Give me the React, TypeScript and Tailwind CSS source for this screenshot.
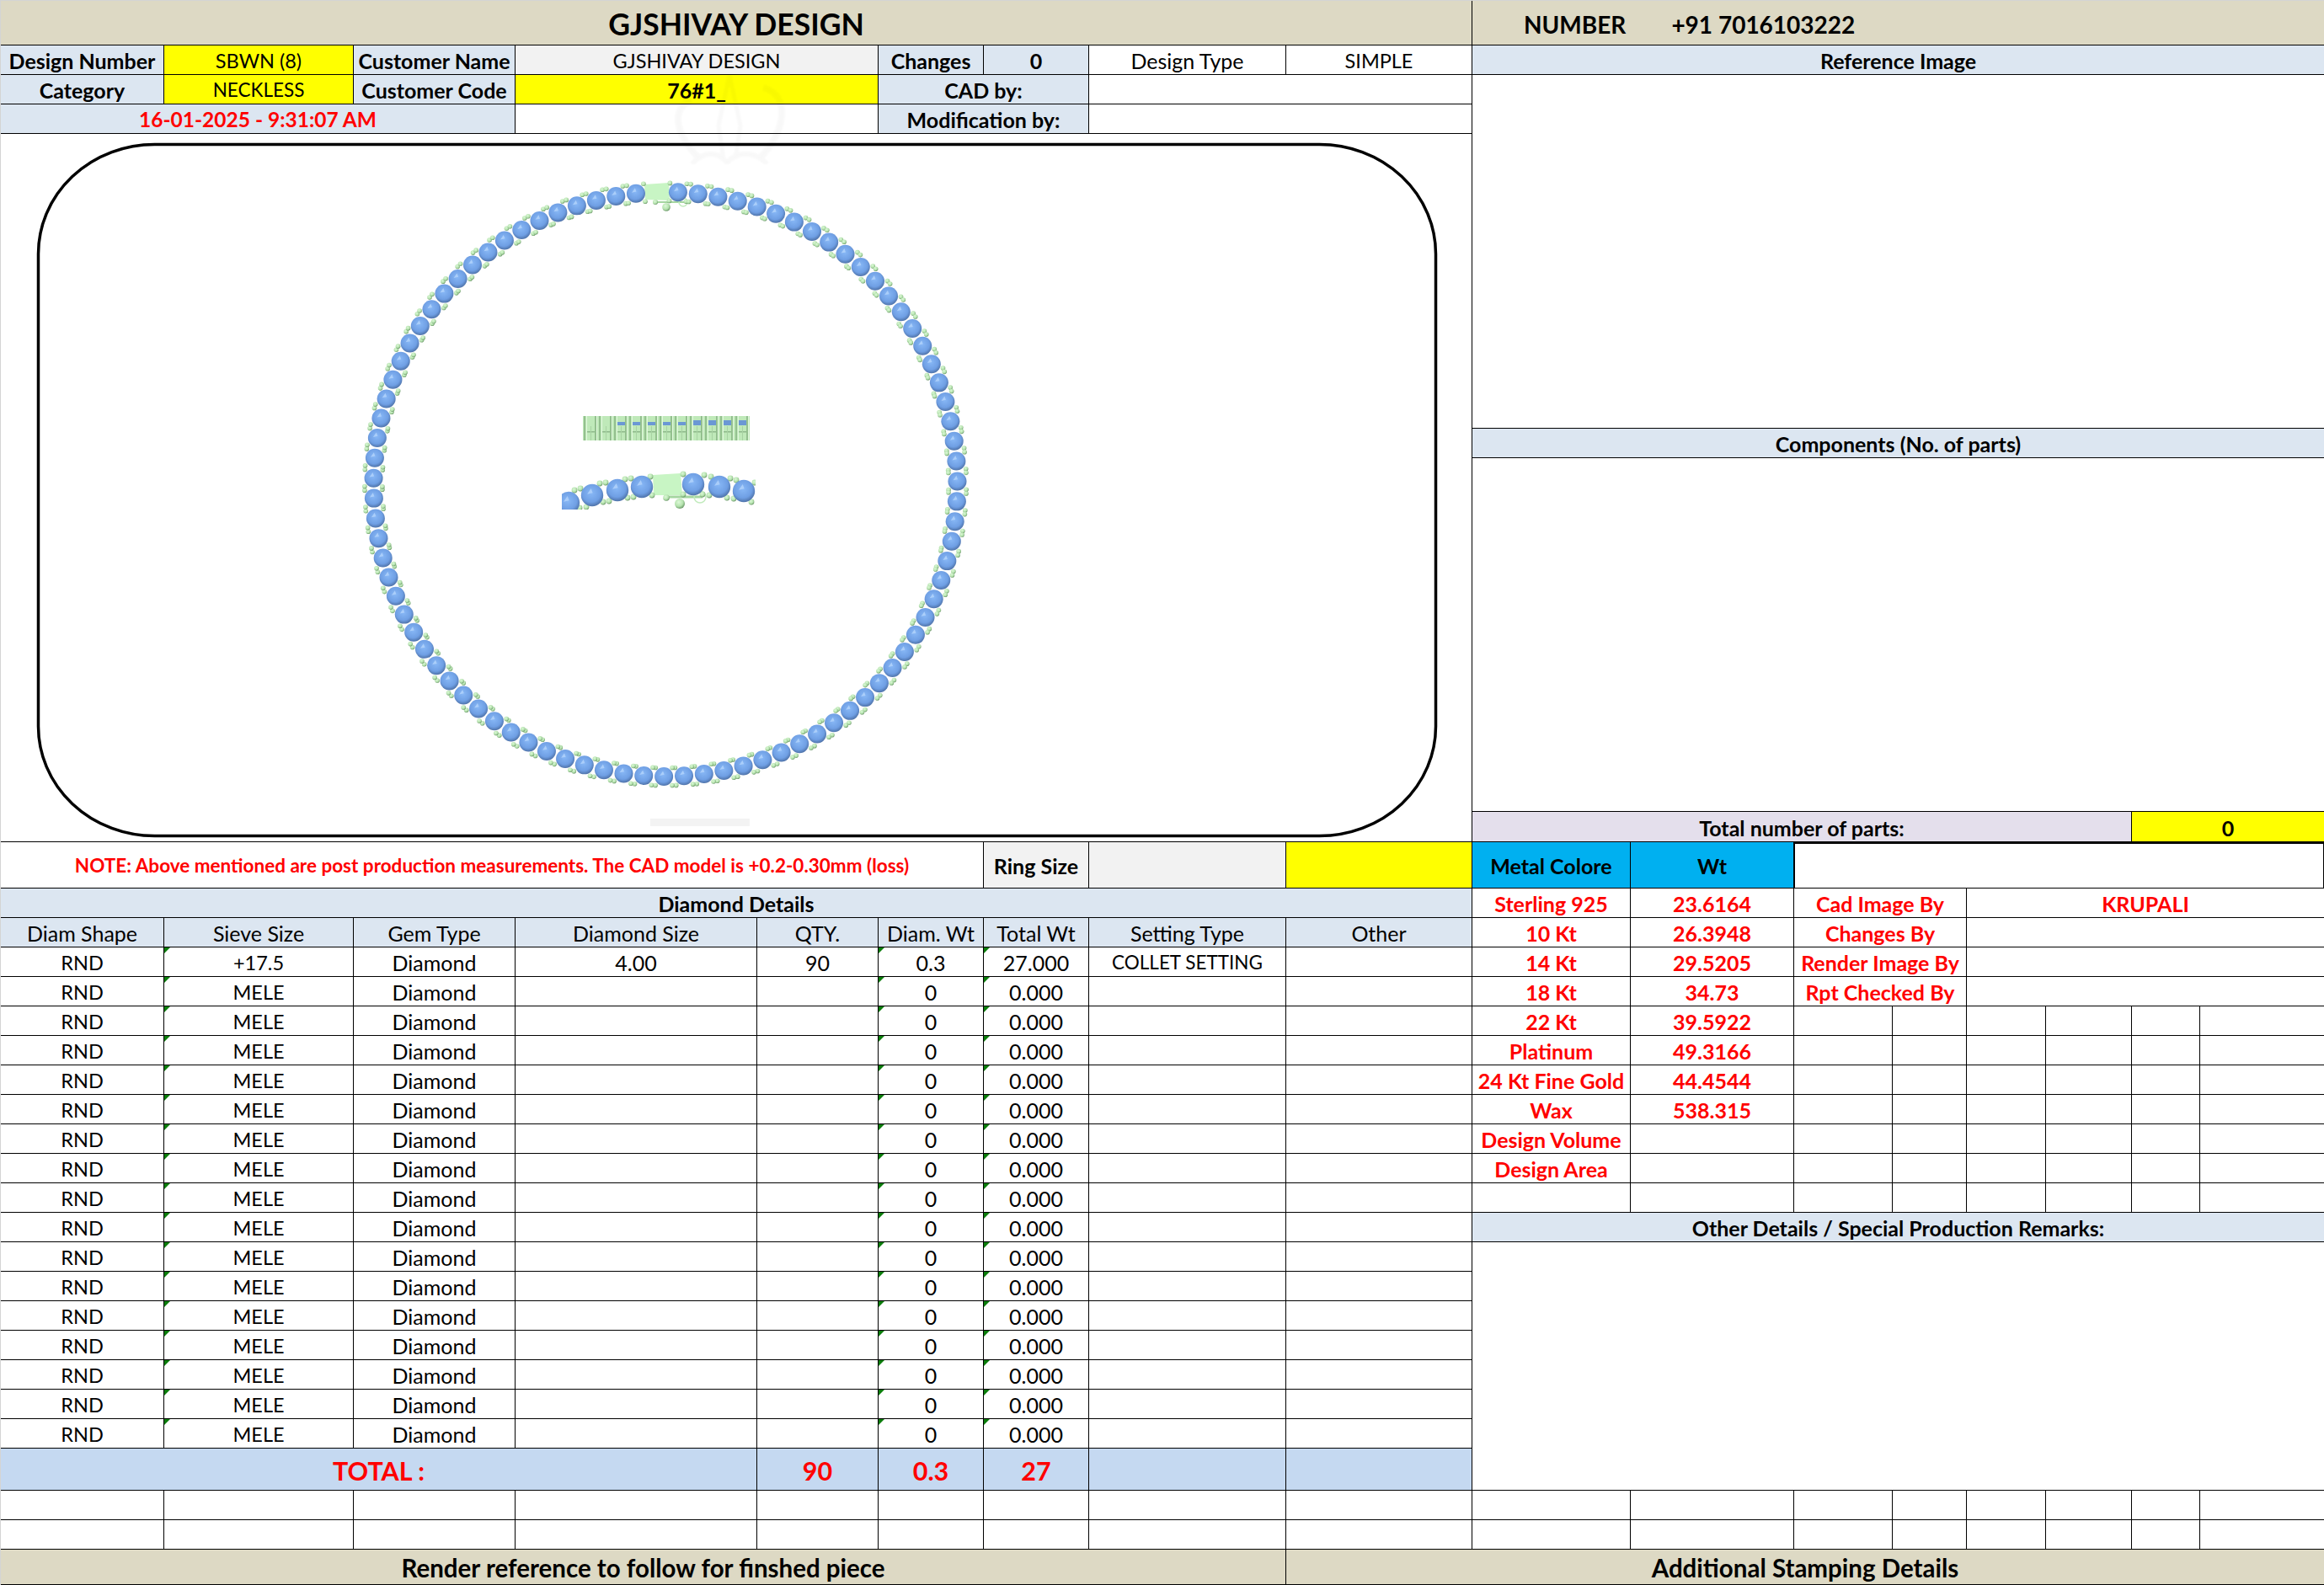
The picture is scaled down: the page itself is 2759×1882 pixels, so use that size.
import type { ReactNode } from 'react';

// Spreadsheet-style design sheet. Column widths come from the sheet's gridlines.

const LEFT_COLS = 'grid grid-cols-[194px_225px_192px_287px_144px_125px_125px_234px_221px]';
const RIGHT_COLS = 'grid grid-cols-[188px_194px_117px_88px_94px_102px_81px_147px]';
const ROW = 'h-[35px]';

const BLUE = 'bg-[#dce6f1]';
const YELLOW = 'bg-[#ffff00]';
const GRAY = 'bg-[#f2f2f2]';
const KHAKI = 'bg-[#ddd9c4]';
const TOTAL = 'bg-[#c5d9f1]';
const B = 'font-bold';
const RED = 'font-bold text-[#ff0000]';
// Lato's capitals run wider than the sheet's, so all-caps values sit a little smaller
const CAPS = 'text-[23.5px]';

function Cell({ className = '', noRight = false, mark = false, children }: {
    className?: string; noRight?: boolean; mark?: boolean; children?: ReactNode;
}) {
    return (
        <div className={`relative flex items-center justify-center whitespace-nowrap overflow-hidden border-b border-black pt-[3px] ${noRight ? '' : 'border-r'} ${className}`}>
            {mark && <span className="absolute left-0 top-0 h-0 w-0 border-t-[7px] border-r-[7px] border-t-[#0b7d0b] border-r-transparent" />}
            {children}
        </div>
    );
}

// ─── Drawing ────────────────────────────────────────────────────────────────

function Gem({ x, y, r }: { x: number; y: number; r: number }) {
    return (
        <g>
            <circle cx={x} cy={y} r={r} fill="url(#gem)" />
            <polygon
                points={`${x - r * 0.45},${y - r * 0.1} ${x - r * 0.1},${y - r * 0.6} ${x + r * 0.05},${y - r * 0.2}`}
                fill="#b4d4fb"
                opacity={0.8}
            />
        </g>
    );
}

function Prong({ x, y, r }: { x: number; y: number; r: number }) {
    return <circle cx={x} cy={y} r={r} fill="url(#prong)" />;
}

const RING_COUNT = 90;
const RING_START = 2.47;
const RING_STEP = 3.952;

const ring = Array.from({ length: RING_COUNT }, (_, i) => {
    const a = ((RING_START + i * RING_STEP) * Math.PI) / 180;
    const ux = Math.sin(a);
    const uy = -Math.cos(a);
    const x = 790 + 346.5 * ux;
    const y = 575 + 347 * uy;
    const at = (t: number, n: number) => ({ x: x + uy * -t + ux * n, y: y + ux * t + uy * n });
    return { x, y, prongs: [at(-10, 10.5), at(10, 10.5), at(-10, -10.5), at(10, -10.5)] };
});

// the cropped front view under the side view, read off the picture
const arcGems = [[675, 597], [703, 588], [733, 582], [762, 578], [823, 575], [854, 578], [883, 583]];
const arcProngs = [
    [682, 582], [689, 580], [688, 603], [696, 602], [712, 574], [719, 573], [716, 596], [723, 595],
    [742, 569], [749, 568], [745, 591], [752, 590], [772, 566], [774, 588], [811, 563], [811, 587],
    [836, 564], [834, 587], [844, 566], [842, 588], [867, 568], [863, 591], [874, 570], [871, 592],
    [896, 573], [892, 596], [668, 610],
];

const sideUnits = Array.from({ length: 11 }, (_, i) => 692 + i * 18);

function NecklaceDrawing() {
    return (
        <svg viewBox="1 159 1746 840" className="block h-[840px] w-[1746px]">
            <defs>
                <radialGradient id="gem" cx="46%" cy="40%" r="62%">
                    <stop offset="0%" stopColor="#88b8f6" />
                    <stop offset="66%" stopColor="#6f9fe4" />
                    <stop offset="100%" stopColor="#4c6fa4" />
                </radialGradient>
                <radialGradient id="prong" cx="40%" cy="35%" r="70%">
                    <stop offset="0%" stopColor="#dcf8d7" />
                    <stop offset="60%" stopColor="#b4e2ad" />
                    <stop offset="100%" stopColor="#5f8c5d" />
                </radialGradient>
                <clipPath id="arcClip">
                    <rect x="667" y="555" width="230" height="50" />
                </clipPath>
            </defs>

            <rect x="772" y="972" width="118" height="9" fill="#f3f3f3" />
            <rect x="45.5" y="171.5" width="1659" height="821" rx="138" ry="130" fill="none" stroke="#000" strokeWidth="3.5" />

            {/* necklace, top view */}
            <path d="M765 219 L794 217 L795 238 L766 237 Z" fill="#c8f5c4" />
            <path d="M778 240 L812 240" stroke="#a5d6a0" strokeWidth="2" />
            <circle cx="811" cy="240" r="5" fill="none" stroke="#c2ebbd" strokeWidth="1.5" />
            <Prong x={778} y={240} r={3} />
            <Prong x={791} y={246} r={4.8} />
            {ring.map((g, i) => (
                <g key={i}>
                    {g.prongs.map((p, j) => <Prong key={j} x={p.x} y={p.y} r={2.8} />)}
                    <Gem x={g.x} y={g.y} r={11} />
                </g>
            ))}

            {/* side view */}
            <rect x="692" y="494" width="198" height="29" fill="#bfe9b9" />
            {sideUnits.map((x, i) => (
                <g key={x}>
                    {i > 1 && <rect x={x + 5} y={501 - (i > 6 ? 2 : 0)} width="9" height={4 + (i > 6 ? 2 : 0)} fill="#6b98d4" />}
                    <rect x={x + 5} y="512" width="9" height="1.5" fill="#8fb98b" />
                    <rect x={x + 1} y="494" width="2" height="29" fill="#94c08f" />
                    <rect x={x + 4} y="494" width="1" height="29" fill="#e2f8de" />
                    <rect x={x + 9} y="506" width="1" height="17" fill="#a8d3a3" />
                    <rect x={x + 14} y="494" width="2" height="29" fill="#94c08f" />
                    <rect x={x + 16} y="494" width="1" height="29" fill="#e2f8de" />
                </g>
            ))}

            {/* necklace, cropped front view */}
            <g clipPath="url(#arcClip)">
                <path d="M775 564 L808 562 L810 588 L776 588 Z" fill="#c8f5c4" />
            </g>
            <path d="M790 590 L834 590" stroke="#a5d6a0" strokeWidth="3" />
            <circle cx="831" cy="590" r="7" fill="none" stroke="#c2ebbd" strokeWidth="1.5" />
            <Prong x={791} y={591} r={3.8} />
            <Prong x={807} y={598} r={6} />
            <g clipPath="url(#arcClip)">
                {arcProngs.map(([x, y], i) => <Prong key={i} x={x} y={y} r={3.4} />)}
                {arcGems.map(([x, y], i) => <Gem key={i} x={x} y={y} r={13.2} />)}
            </g>
        </svg>
    );
}

// Faint picture that bleeds out of the drawing over the header rows.
function Watermark() {
    return (
        <svg viewBox="0 0 150 106" className="pointer-events-none absolute left-[790px] top-[88px] h-[106px] w-[150px] opacity-[0.025] blur-[1px]">
            <path d="M75 0 L62 60 L68 100 M75 0 L88 60 L82 100" fill="none" stroke="#000" strokeWidth="5" />
            <path d="M40 100 C10 70 5 40 30 30 M110 100 C140 70 150 25 115 15" fill="none" stroke="#000" strokeWidth="8" />
            <path d="M30 106 C45 90 60 90 72 104 C85 90 105 90 120 106" fill="none" stroke="#000" strokeWidth="6" />
        </svg>
    );
}

// ─── Sheet ──────────────────────────────────────────────────────────────────

function DiamondRow({ sieve = 'MELE', size = '', qty = '', wt = '0', total = '0.000', setting = '' }: {
    sieve?: string; size?: string; qty?: string; wt?: string; total?: string; setting?: string;
}) {
    return (
        <div className={`${LEFT_COLS} ${ROW}`}>
            <Cell className={CAPS}>RND</Cell>
            <Cell mark className={CAPS}>{sieve}</Cell>
            <Cell>Diamond</Cell>
            <Cell>{size}</Cell>
            <Cell>{qty}</Cell>
            <Cell mark>{wt}</Cell>
            <Cell mark>{total}</Cell>
            <Cell className="text-[22.5px]">{setting}</Cell>
            <Cell />
        </div>
    );
}

function LeftColumn() {
    return (
        <div className="w-[1747px] shrink-0">
            <Cell className={`h-[53px] ${KHAKI} ${B} text-[35.5px]`}>GJSHIVAY DESIGN</Cell>
            <div className={`${LEFT_COLS} ${ROW}`}>
                <Cell className={`${BLUE} ${B}`}>Design Number</Cell>
                <Cell className={`${YELLOW} ${CAPS}`}>SBWN (8)</Cell>
                <Cell className={`${BLUE} ${B}`}>Customer Name</Cell>
                <Cell className={`col-span-2 ${GRAY} ${CAPS}`}>GJSHIVAY DESIGN</Cell>
                <Cell className={`${BLUE} ${B}`}>Changes</Cell>
                <Cell className={`${BLUE} ${B}`}>0</Cell>
                <Cell>Design Type</Cell>
                <Cell className={CAPS}>SIMPLE</Cell>
            </div>
            <div className={`${LEFT_COLS} ${ROW}`}>
                <Cell className={`${BLUE} ${B}`}>Category</Cell>
                <Cell className={`${YELLOW} text-[22.5px]`}>NECKLESS</Cell>
                <Cell className={`${BLUE} ${B}`}>Customer Code</Cell>
                <Cell className={`col-span-2 ${YELLOW} ${B}`}>76#1_</Cell>
                <Cell className={`col-span-2 ${BLUE} ${B}`}>CAD by:</Cell>
                <Cell className="col-span-2" />
            </div>
            <div className={`${LEFT_COLS} ${ROW}`}>
                <Cell className={`col-span-3 ${BLUE} ${RED} text-[24.5px]`}>16-01-2025 - 9:31:07 AM</Cell>
                <Cell className="col-span-2" />
                <Cell className={`col-span-2 ${BLUE} ${B}`}>Modification by:</Cell>
                <Cell className="col-span-2" />
            </div>
            <div className="h-[841px] border-r border-b border-black">
                <NecklaceDrawing />
            </div>
            <div className={`${LEFT_COLS} h-[55px]`}>
                <Cell className={`col-span-6 ${RED} text-[22.5px]`}>NOTE: Above mentioned are post production measurements. The CAD model is +0.2-0.30mm (loss)</Cell>
                <Cell className={`${GRAY} ${B}`}>Ring Size</Cell>
                <Cell className={GRAY} />
                <Cell className={YELLOW} />
            </div>
            <Cell className={`${ROW} ${BLUE} ${B}`}>Diamond Details</Cell>
            <div className={`${LEFT_COLS} ${ROW} ${BLUE}`}>
                <Cell>Diam Shape</Cell>
                <Cell>Sieve Size</Cell>
                <Cell>Gem Type</Cell>
                <Cell>Diamond Size</Cell>
                <Cell>QTY.</Cell>
                <Cell>Diam. Wt</Cell>
                <Cell>Total Wt</Cell>
                <Cell>Setting Type</Cell>
                <Cell>Other</Cell>
            </div>
            <DiamondRow sieve="+17.5" size="4.00" qty="90" wt="0.3" total="27.000" setting="COLLET SETTING" />
            {Array.from({ length: 16 }, (_, i) => <DiamondRow key={i} />)}
            <div className={`${LEFT_COLS} h-[50px] ${TOTAL} ${RED} text-[30.5px]`}>
                <Cell className="col-span-4">TOTAL :</Cell>
                <Cell>90</Cell>
                <Cell>0.3</Cell>
                <Cell>27</Cell>
                <Cell />
                <Cell />
            </div>
        </div>
    );
}

const metals: [string, string][] = [
    ['Sterling 925', '23.6164'],
    ['10 Kt', '26.3948'],
    ['14 Kt', '29.5205'],
    ['18 Kt', '34.73'],
];
const metals2: [string, string][] = [
    ['22 Kt', '39.5922'],
    ['Platinum', '49.3166'],
    ['24 Kt Fine Gold', '44.4544'],
    ['Wax', '538.315'],
    ['Design Volume', ''],
    ['Design Area', ''],
    ['', ''],
];
const signoff = [
    ['Cad Image By', 'KRUPALI'],
    ['Changes By', ''],
    ['Render Image By', ''],
    ['Rpt Checked By', ''],
];

function RightColumn() {
    return (
        <div className="w-[1011px] shrink-0">
            <Cell noRight className={`h-[53px] !justify-start pl-[61px] gap-[54px] ${KHAKI} ${B} text-[28px]`}>
                <span>NUMBER</span>
                <span>+91 7016103222</span>
            </Cell>
            <Cell noRight className={`${ROW} ${BLUE} ${B}`}>Reference Image</Cell>
            <Cell noRight className="h-[420px]" />
            <Cell noRight className={`${ROW} ${BLUE} ${B}`}>Components (No. of parts)</Cell>
            <Cell noRight className="h-[420px]" />
            <div className="flex h-[36px]">
                <Cell noRight className={`w-[782px] bg-[#e4dfec] ${B}`}>Total number of parts:</Cell>
                <Cell noRight className={`w-[229px] border-l border-black ${YELLOW} ${B}`}>0</Cell>
            </div>
            <div className={`${RIGHT_COLS} h-[55px]`}>
                <Cell className={`bg-[#00b0f0] ${B}`}>Metal Colore</Cell>
                <Cell className={`bg-[#00b0f0] ${B}`}>Wt</Cell>
                <Cell className="col-span-6 border-l border-t-2" />
            </div>
            {metals.map(([name, wt], i) => (
                <div key={name} className={`${RIGHT_COLS} ${ROW} ${RED}`}>
                    <Cell>{name}</Cell>
                    <Cell>{wt}</Cell>
                    <Cell className="col-span-2">{signoff[i][0]}</Cell>
                    <Cell noRight className="col-span-4">{signoff[i][1]}</Cell>
                </div>
            ))}
            {metals2.map(([name, wt], i) => (
                <div key={i} className={`${RIGHT_COLS} ${ROW} ${RED}`}>
                    <Cell>{name}</Cell>
                    <Cell>{wt}</Cell>
                    <Cell />
                    <Cell />
                    <Cell />
                    <Cell />
                    <Cell />
                    <Cell noRight />
                </div>
            ))}
            <Cell noRight className={`${ROW} ${BLUE} ${B}`}>Other Details / Special Production Remarks:</Cell>
            <Cell noRight className="h-[295px]" />
        </div>
    );
}

function BlankRow() {
    return (
        <div className={`flex ${ROW}`}>
            <div className={`${LEFT_COLS} w-[1747px] shrink-0`}>
                {Array.from({ length: 9 }, (_, i) => <Cell key={i} />)}
            </div>
            <div className={`${RIGHT_COLS} w-[1011px] shrink-0`}>
                {Array.from({ length: 8 }, (_, i) => <Cell key={i} noRight={i === 7} />)}
            </div>
        </div>
    );
}

export default function App() {
    return (
        <div className="relative h-[1882px] w-[2759px] border-t border-l border-[#d4d4d4] bg-white text-[25px] leading-none text-black [font-family:Lato,'Liberation_Sans',sans-serif]">
            <div className="flex">
                <LeftColumn />
                <RightColumn />
            </div>
            <BlankRow />
            <BlankRow />
            <div className={`flex h-[42px] ${KHAKI} ${B} text-[29.5px]`}>
                <Cell className="w-[1526px] shrink-0">Render reference to follow for finshed piece</Cell>
                <Cell noRight className="w-[1232px] shrink-0">Additional Stamping Details</Cell>
            </div>
            <Watermark />
        </div>
    );
}
